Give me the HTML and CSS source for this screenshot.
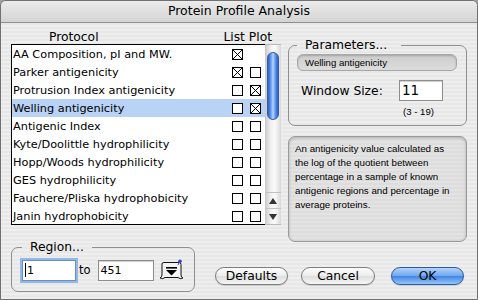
FILE: index.html
```html
<!DOCTYPE html>
<html lang="en">
<head>
    <meta charset="UTF-8">
    <meta name="viewport" content="width=device-width, initial-scale=1.0">
    <title>Protein Profile Analysis</title>
    <link rel="stylesheet" href="styles.css">
</head>
<body>
    <div class="window">
        <div class="titlebar">Protein Profile Analysis</div>
        <div class="content">
            <div class="top">
                <div class="left">
                    <div class="head">
                        <span class="head-protocol">Protocol</span>
                        <span class="head-cols">List Plot</span>
                    </div>
                    <div class="listwrap">
                        <div class="list">
                            <div class="row"><span class="name">AA Composition, pI and MW.</span><span class="checks"><span class="box on"></span><span class="box none"></span></span></div>
                            <div class="row"><span class="name">Parker antigenicity</span><span class="checks"><span class="box on"></span><span class="box"></span></span></div>
                            <div class="row"><span class="name">Protrusion Index antigenicity</span><span class="checks"><span class="box"></span><span class="box on"></span></span></div>
                            <div class="row sel"><span class="name">Welling antigenicity</span><span class="checks"><span class="box"></span><span class="box on"></span></span></div>
                            <div class="row"><span class="name">Antigenic Index</span><span class="checks"><span class="box"></span><span class="box"></span></span></div>
                            <div class="row"><span class="name">Kyte/Doolittle hydrophilicity</span><span class="checks"><span class="box"></span><span class="box"></span></span></div>
                            <div class="row"><span class="name">Hopp/Woods hydrophilicity</span><span class="checks"><span class="box"></span><span class="box"></span></span></div>
                            <div class="row"><span class="name">GES hydrophilicity</span><span class="checks"><span class="box"></span><span class="box"></span></span></div>
                            <div class="row"><span class="name">Fauchere/Pliska hydrophobicity</span><span class="checks"><span class="box"></span><span class="box"></span></span></div>
                            <div class="row"><span class="name">Janin hydrophobicity</span><span class="checks"><span class="box"></span><span class="box"></span></span></div>
                        </div>
                        <div class="scroll">
                            <div class="thumb"></div>
                            <div class="track"></div>
                            <div class="arrow">
                                <svg width="8" height="6" viewBox="0 0 8 6"><polygon points="4,0 8,6 0,6" fill="#333"/></svg>
                            </div>
                            <div class="arrow">
                                <svg width="8" height="6" viewBox="0 0 8 6"><polygon points="0,0 8,0 4,6" fill="#333"/></svg>
                            </div>
                        </div>
                    </div>
                </div>
                <div class="right">
                    <fieldset class="group params">
                        <legend>Parameters...</legend>
                        <div class="pill">Welling antigenicity</div>
                        <div class="winrow">
                            <span class="winlabel">Window Size:</span>
                            <div class="field size">11</div>
                        </div>
                        <div class="range">(3 - 19)</div>
                    </fieldset>
                    <div class="desc">An antigenicity value calculated as<br>the log of the quotient between<br>percentage in a sample of known<br>antigenic regions and percentage in<br>average proteins.</div>
                </div>
            </div>
            <div class="bottom">
                <fieldset class="group region">
                    <legend>Region...</legend>
                    <div class="region-row">
                        <div class="field from"><span class="caret"></span>1</div>
                        <span class="to">to</span>
                        <div class="field upto">451</div>
                        <svg class="seqicon" width="27" height="22" viewBox="0 0 27 22">
                            <path d="M4 5 Q4 3.5 6 3.5 L21 3.5 Q23 3.5 23 5.5 L23 16 Q23 18.5 25 19 Q22 20.5 20 18.5 L7 18.5 Q5 20.5 2 19 Q4 18 4 16 Z" fill="#f4f4f4" stroke="#111" stroke-width="1"/>
                            <rect x="8" y="8" width="11" height="1.6" fill="#000"/>
                            <polygon points="8,11 19,11 13.5,16.5" fill="#000"/>
                            <line x1="20" y1="6" x2="21.5" y2="2.5" stroke="#555" stroke-width="1"/>
                            <circle cx="22" cy="2.2" r="1.8" fill="#3344cc"/>
                        </svg>
                    </div>
                </fieldset>
                <div class="buttons">
                    <div class="btn defaults">Defaults</div>
                    <div class="btn cancel">Cancel</div>
                    <div class="btn ok">OK</div>
                </div>
            </div>
        </div>
    </div>
</body>
</html>
```

FILE: styles.css
```css
* {
    box-sizing: border-box;
}
body {
    margin: 0;
    background-color: #a0a0a0;
    font-family: "DejaVu Sans", sans-serif;
    color: #000;
}
.window {
    width: 478px;
    height: 300px;
    border: 1px solid #707070;
    border-radius: 6px 6px 0 0;
    overflow: hidden;
    background: repeating-linear-gradient(#eeeeee 0 2px, #e7e7e7 2px 4px);
}
.titlebar {
    height: 22px;
    line-height: 20px;
    text-align: center;
    font-size: 12.5px;
    border-bottom: 1px solid #8d8d8d;
    background: linear-gradient(#ebebeb, #d4d4d4);
}
.content {
    padding: 0 10px;
}
.top {
    display: flex;
    gap: 7px;
}
.left {
    width: 270px;
}
.head {
    height: 21px;
    display: flex;
    align-items: flex-end;
    font-size: 12.3px;
    line-height: 14px;
}
.head-protocol {
    margin-left: 38px;
}
.head-cols {
    margin-left: auto;
    margin-right: 9px;
}
.listwrap {
    display: flex;
    height: 181px;
}
.list {
    width: 254px;
    border: 1px solid #000;
    border-right: 0;
    background-color: #fff;
    overflow: hidden;
}
.row {
    height: 18px;
    display: flex;
    align-items: center;
    padding-left: 1px;
    font-size: 11.3px;
    white-space: nowrap;
}
.row .name {
    flex: 1;
}
.row.sel {
    background-color: #b8d3f6;
}
.checks {
    display: flex;
    gap: 7px;
    padding-right: 4px;
}
.box {
    width: 11px;
    height: 11px;
    border: 1px solid #000;
    background-color: #fff;
}
.box.on {
    background:
        linear-gradient(45deg, transparent calc(50% - 0.7px), #000 50%, transparent calc(50% + 0.7px)),
        linear-gradient(-45deg, transparent calc(50% - 0.7px), #000 50%, transparent calc(50% + 0.7px)),
        #fff;
}
.box.none {
    border: 0;
    background: none;
}
.scroll {
    width: 16px;
    display: flex;
    flex-direction: column;
    background: linear-gradient(90deg, #c9c9c9, #efefef 35%, #fbfbfb 60%, #d9d9d9);
    border-top: 1px solid #b9b9b9;
    border-bottom: 1px solid #b9b9b9;
}
.thumb {
    margin: 7px 2px 0;
    height: 68px;
    border-radius: 6px;
    border: 1px solid #2f5da8;
    background: linear-gradient(90deg, #2a5ec4, #5b91e6 25%, #b6d5fb 50%, #5b91e6 75%, #2a5ec4);
}
.track {
    flex: 1;
}
.arrow {
    height: 16px;
    display: flex;
    align-items: center;
    justify-content: center;
    border-top: 1px solid #c2c2c2;
}
.right {
    width: 179px;
    padding-top: 15px;
}
.group {
    margin: 0;
    min-width: 0;
    border: 1px solid #8f8f8f;
    border-radius: 7px;
}
.group legend {
    font-size: 12.3px;
    line-height: 14px;
    padding: 0 14px 0 8px;
}
.params {
    padding: 2px 9px 7px 8px;
}
.pill {
    height: 17px;
    border: 1px solid #a8a8a8;
    border-radius: 6px;
    background: linear-gradient(#cccccc, #dddddd);
    box-shadow: inset 0 1px 2px rgba(0, 0, 0, 0.2);
    font-family: "Liberation Sans", sans-serif;
    font-size: 9.6px;
    line-height: 15px;
    padding-left: 7px;
}
.winrow {
    display: flex;
    align-items: center;
    margin-top: 9px;
}
.winlabel {
    width: 102px;
    padding-left: 4px;
    font-size: 12.3px;
}
.field {
    height: 21px;
    border: 1px solid #8e8e8e;
    background-color: #fff;
    box-shadow: inset 0 1px 1px rgba(0, 0, 0, 0.2);
    font-size: 11px;
    line-height: 19px;
    padding-left: 2px;
}
.field.size {
    width: 44px;
    font-size: 13.5px;
}
.range {
    margin: 5px 0 0 106px;
    font-family: "Liberation Sans", sans-serif;
    font-size: 9.6px;
    line-height: 12px;
}
.desc {
    margin-top: 10px;
    height: 106px;
    border: 1px solid #9a9a9a;
    border-radius: 7px;
    background-color: rgba(0, 0, 0, 0.045);
    box-shadow: inset 0 1px 3px rgba(0, 0, 0, 0.25);
    padding: 5px 6px;
    font-family: "Liberation Sans", sans-serif;
    font-size: 9.75px;
    line-height: 14px;
    white-space: nowrap;
}
.bottom {
    display: flex;
    align-items: flex-end;
    margin-top: -1px;
}
.region {
    width: 184px;
    padding: 6px 8px 10px 10px;
}
.region legend {
    line-height: 12px;
    padding: 0 8px;
}
.region-row {
    display: flex;
    align-items: center;
}
.field.from {
    width: 54px;
    border-color: #6b8fc2;
    box-shadow: 0 0 0 2px #93b7e7;
    display: flex;
    align-items: center;
}
.caret {
    width: 1px;
    height: 14px;
    background-color: #000;
    margin-right: 1px;
}
.field.upto {
    width: 56px;
}
.to {
    margin: 0 7px 0 3px;
    font-size: 11.5px;
}
.seqicon {
    margin-left: 4px;
}
.buttons {
    display: flex;
    margin: 0 0 7px 20px;
}
.btn {
    height: 18px;
    border-radius: 9px;
    border: 1px solid #7d7d7d;
    font-size: 12.3px;
    line-height: 16px;
    text-align: center;
    background: linear-gradient(#fdfdfd, #ececec 50%, #dedede 52%, #f6f6f6);
    box-shadow: 0 1px 1px rgba(0, 0, 0, 0.15);
}
.defaults {
    width: 73px;
}
.cancel {
    width: 74px;
    margin-left: 13px;
}
.ok {
    width: 73px;
    margin-left: 16px;
    border-color: #2c5aa2;
    background: linear-gradient(#b2d3f8, #6fa6ee 50%, #3f86e6 52%, #95c6f8);
}
```
